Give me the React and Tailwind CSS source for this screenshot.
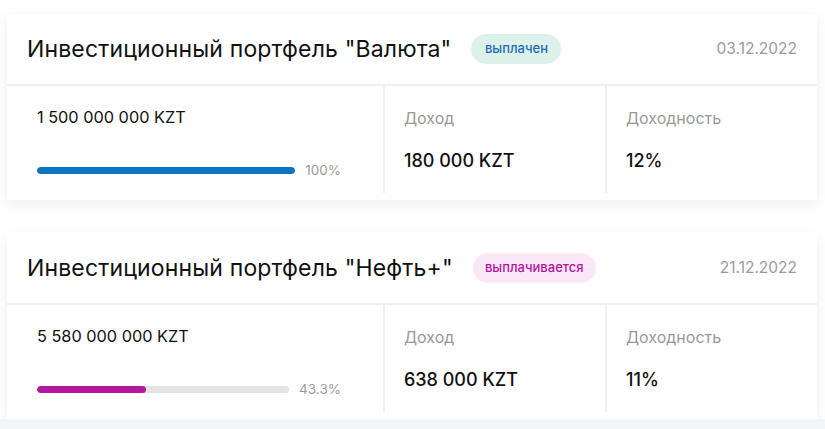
import React from "react";

const cards = [
  {
    title: 'Инвестиционный портфель "Валюта"',
    status: "выплачен",
    badge: "bg-[#dcf1ea] text-[#1e6db3]",
    badgeW: "w-[90px]",
    date: "03.12.2022",
    amount: "1 500 000 000 KZT",
    pct: 100,
    pctLabel: "100%",
    bar: "bg-[#0b76bf]",
    income: "180 000 KZT",
    yieldv: "12%",
  },
  {
    title: 'Инвестиционный портфель "Нефть+"',
    status: "выплачивается",
    badge: "bg-[#fae8f6] text-[#b4169f]",
    badgeW: "w-[123px]",
    date: "21.12.2022",
    amount: "5 580 000 000 KZT",
    pct: 43.3,
    pctLabel: "43.3%",
    bar: "bg-[#b5179e]",
    income: "638 000 KZT",
    yieldv: "11%",
  },
];

function Card({ c }) {
  return (
    <div className="bg-white shadow-[0_4px_14px_rgba(20,30,60,0.07)]">
      <div className="flex h-[72px] items-center px-5 border-b-2 border-[#efefef]">
        <div className="text-[23px] leading-none text-[#111] tracking-[0.15px]">{c.title}</div>
        <div
          className={`ml-5 h-[30px] ${c.badgeW} flex items-center justify-center rounded-full text-[13px] font-medium ${c.badge}`}
        >
          {c.status}
        </div>
        <div className="ml-auto text-[15.5px] text-[#9b9b9b]">{c.date}</div>
      </div>
      <div className="flex h-[114px] pb-[7px]">
        <div className="w-[376px] shrink-0 pl-[30px] pr-[42px] pt-[20px] flex flex-col">
          <div className="text-[16.3px] text-[#111] leading-[22px]">{c.amount}</div>
          <div className="mt-[32px] flex items-center gap-[10px]">
            <div className="flex-1 h-[7px] rounded-full bg-[#e4e4e4] overflow-hidden">
              <div className={`h-full rounded-full ${c.bar}`} style={{ width: `${c.pct}%` }} />
            </div>
            <div className="text-[13.5px] text-[#9b9b9b]">{c.pctLabel}</div>
          </div>
        </div>
        <div className="w-[222px] shrink-0 border-l-2 border-[#efefef] pl-[19px] pt-[20px]">
          <div className="text-[16px] text-[#999] leading-[24px]">Доход</div>
          <div className="mt-[19px] text-[18px] font-medium text-[#111] leading-[24px]">{c.income}</div>
        </div>
        <div className="flex-1 border-l-2 border-[#efefef] pl-[19px] pt-[20px]">
          <div className="text-[16px] text-[#999] leading-[24px]">Доходность</div>
          <div className="mt-[19px] text-[18px] font-medium text-[#111] leading-[24px]">{c.yieldv}</div>
        </div>
      </div>
    </div>
  );
}

export default function App() {
  return (
    <div
      className="w-[825px] h-[429px] overflow-hidden bg-white pt-[14px] flex flex-col"
      style={{ fontFamily: "Inter, 'Noto Sans', sans-serif" }}
    >
      <div className="pl-[7px] pr-[8px] flex flex-col gap-[33px]">
        {cards.map((c, i) => (
          <Card key={i} c={c} />
        ))}
      </div>
      <div className="flex-1 bg-[#f4f5f7]" />
    </div>
  );
}
